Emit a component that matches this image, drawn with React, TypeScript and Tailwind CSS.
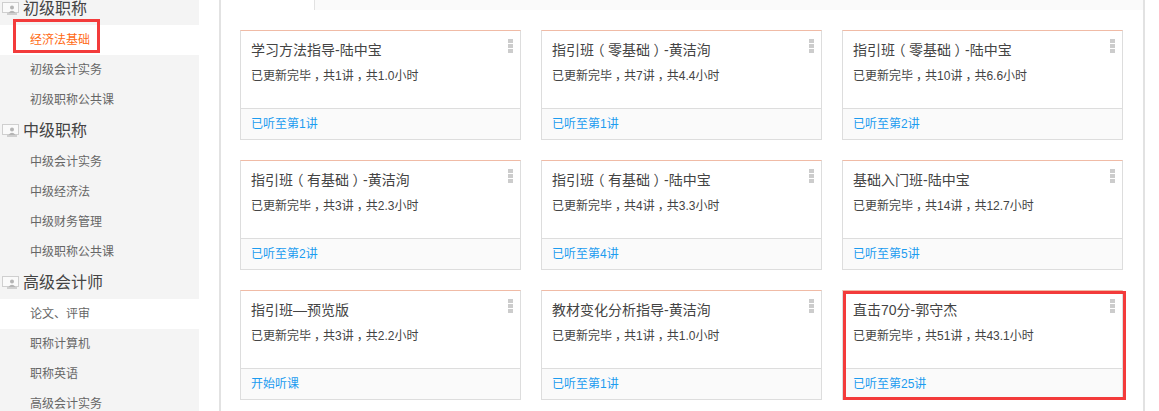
import React from "react";

const font = "font-['Liberation_Sans','Noto_Sans_CJK_SC',sans-serif]";

type Group = { title: string; items: { name: string; active?: boolean; white?: boolean }[] };

const groups: Group[] = [
  {
    title: "初级职称",
    items: [
      { name: "经济法基础", active: true, white: true },
      { name: "初级会计实务" },
      { name: "初级职称公共课" },
    ],
  },
  {
    title: "中级职称",
    items: [
      { name: "中级会计实务" },
      { name: "中级经济法" },
      { name: "中级财务管理" },
      { name: "中级职称公共课" },
    ],
  },
  {
    title: "高级会计师",
    items: [
      { name: "论文、评审", white: true },
      { name: "职称计算机" },
      { name: "职称英语" },
      { name: "高级会计实务" },
    ],
  },
];

const courses = [
  { title: "学习方法指导-陆中宝", lessons: 1, hours: "1.0", progress: "已听至第1讲" },
  { title: "指引班（零基础）-黄洁洵", lessons: 7, hours: "4.4", progress: "已听至第1讲" },
  { title: "指引班（零基础）-陆中宝", lessons: 10, hours: "6.6", progress: "已听至第2讲" },
  { title: "指引班（有基础）-黄洁洵", lessons: 3, hours: "2.3", progress: "已听至第2讲" },
  { title: "指引班（有基础）-陆中宝", lessons: 4, hours: "3.3", progress: "已听至第4讲" },
  { title: "基础入门班-陆中宝", lessons: 14, hours: "12.7", progress: "已听至第5讲" },
  { title: "指引班—预览版", lessons: 3, hours: "2.2", progress: "开始听课" },
  { title: "教材变化分析指导-黄洁洵", lessons: 1, hours: "1.0", progress: "已听至第1讲" },
  { title: "直击70分-郭守杰", lessons: 51, hours: "43.1", progress: "已听至第25讲", marked: true },
];

function ScreenIcon() {
  return (
    <svg width="17" height="14" viewBox="0 0 17 14" className="shrink-0">
      <rect x="0.5" y="0.5" width="16" height="10" fill="#fafafa" stroke="#cfcfcf" />
      <circle cx="10" cy="5.5" r="2" fill="#b4b4b4" />
      <path d="M6.5 11 Q10 6.5 13.5 11 Z" fill="#b4b4b4" />
      <rect x="5" y="11" width="10" height="2" fill="#cfcfcf" />
    </svg>
  );
}

function Sidebar() {
  return (
    <div className="-mt-[7px] w-[199px] shrink-0 bg-[#f4f4f4]">
      {groups.map((group) => (
        <div key={group.title}>
          <div className="flex h-8 items-center gap-1 pl-[2px] text-base text-[#444]">
            <ScreenIcon />
            <span>{group.title}</span>
          </div>
          {group.items.map((item) => (
            <div
              key={item.name}
              className={`flex h-[30px] items-center pl-[30px] text-xs ${item.white ? "bg-white" : ""} ${
                item.active ? "text-[#ff6a13]" : "text-[#666]"
              }`}
            >
              {item.name}
            </div>
          ))}
        </div>
      ))}
    </div>
  );
}

// punctuation sits in the middle of its em box in the picture: half-width glyph, centred
function Punct({ char }: { char: string }) {
  return (
    <span className="inline-block w-[1em] text-center [font-feature-settings:'halt']">{char}</span>
  );
}

function Title({ text }: { text: string }) {
  return (
    <>
      {text.split(/([（）])/).map((part, i) =>
        part === "（" || part === "）" ? <Punct key={i} char={part} /> : part,
      )}
    </>
  );
}

function CourseCard({ course }: { course: (typeof courses)[number] }) {
  return (
    <div className="relative flex h-[110px] w-[281px] flex-col border border-[#ddd] border-t-[#f0bba6] bg-white">
      <div className="flex flex-1 justify-between pl-[10px] pr-[7px] pt-[8px]">
        <div>
          <div className="pt-px text-sm leading-5 text-[#444]">
            <Title text={course.title} />
          </div>
          <div className="mt-[7px] text-xs leading-[18px] text-[#444]">
            已更新完毕
            <Punct char="，" />共{course.lessons}讲
            <Punct char="，" />共{course.hours}小时
          </div>
        </div>
        <div className="flex flex-col gap-px">
          <i className="h-1 w-[5px] bg-[#ccc]" />
          <i className="h-1 w-[5px] bg-[#ccc]" />
          <i className="h-1 w-[5px] bg-[#ccc]" />
        </div>
      </div>
      <div className="flex h-[31px] items-center border-t border-[#ddd] bg-[#fafafa] pl-[10px] text-xs text-[#1c9cf0]">
        {course.progress}
      </div>
      {course.marked && (
        <div className="absolute inset-0 -right-[4px] -bottom-[1px] border-[3px] border-[#f33b3b]" />
      )}
    </div>
  );
}

export default function App() {
  return (
    <div className={`relative flex h-[411px] w-[1159px] overflow-hidden bg-white ${font}`}>
      <Sidebar />
      <div className="ml-5 h-[411px] w-[926px] shrink-0 border-x-2 border-[#e2e2e2]">
        <div className="flex h-[10px]">
          <div className="w-[94px] border-r border-[#e2e2e2]" />
          <div className="flex-1 bg-[#fafafa]" />
        </div>
        <div className="ml-[19px] mt-5 grid grid-cols-[281px_281px_281px] gap-5">
          {courses.map((course) => (
            <CourseCard key={course.title} course={course} />
          ))}
        </div>
      </div>
      <div className="absolute left-[13px] top-[19px] h-[34px] w-[87px] border-[3px] border-[#f33b3b]" />
    </div>
  );
}
